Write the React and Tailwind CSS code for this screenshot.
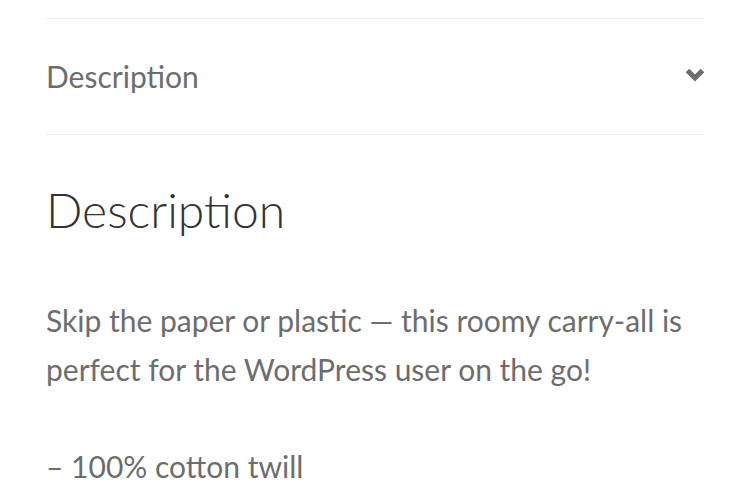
export default function App() {
  return (
    <div className="w-[748px] h-[500px] overflow-hidden bg-white" style={{ fontFamily: 'Lato, "Open Sans", sans-serif' }}>
      <div className="ml-[46px] w-[659px] pt-[18px]">
        {/* accordion tab */}
        <div className="flex h-[117px] items-center justify-between border-y border-[#eeeeee]">
          <span className="text-[30px] leading-[37px] text-[#6d6d6d]">Description</span>
          <svg width="20" height="15" viewBox="0 0 20 15" className="-mt-[4px]">
            <polyline points="2.5,3.5 10,11 17.5,3.5" fill="none" stroke="#6d6d6d" strokeWidth="5" strokeLinecap="butt" strokeLinejoin="miter" />
          </svg>
        </div>

        {/* panel */}
        <h2 className="mt-[45px] text-[48px] leading-[60px] font-light text-[#333333]">Description</h2>
        <div className="mt-[56px] text-[30px] leading-[49px] text-[#6d6d6d]">
          <p>Skip the paper or plastic — this roomy carry-all is perfect for the WordPress user on the go!</p>
          <p className="mt-[48px]">– 100% cotton twill</p>
        </div>
      </div>
    </div>
  );
}
